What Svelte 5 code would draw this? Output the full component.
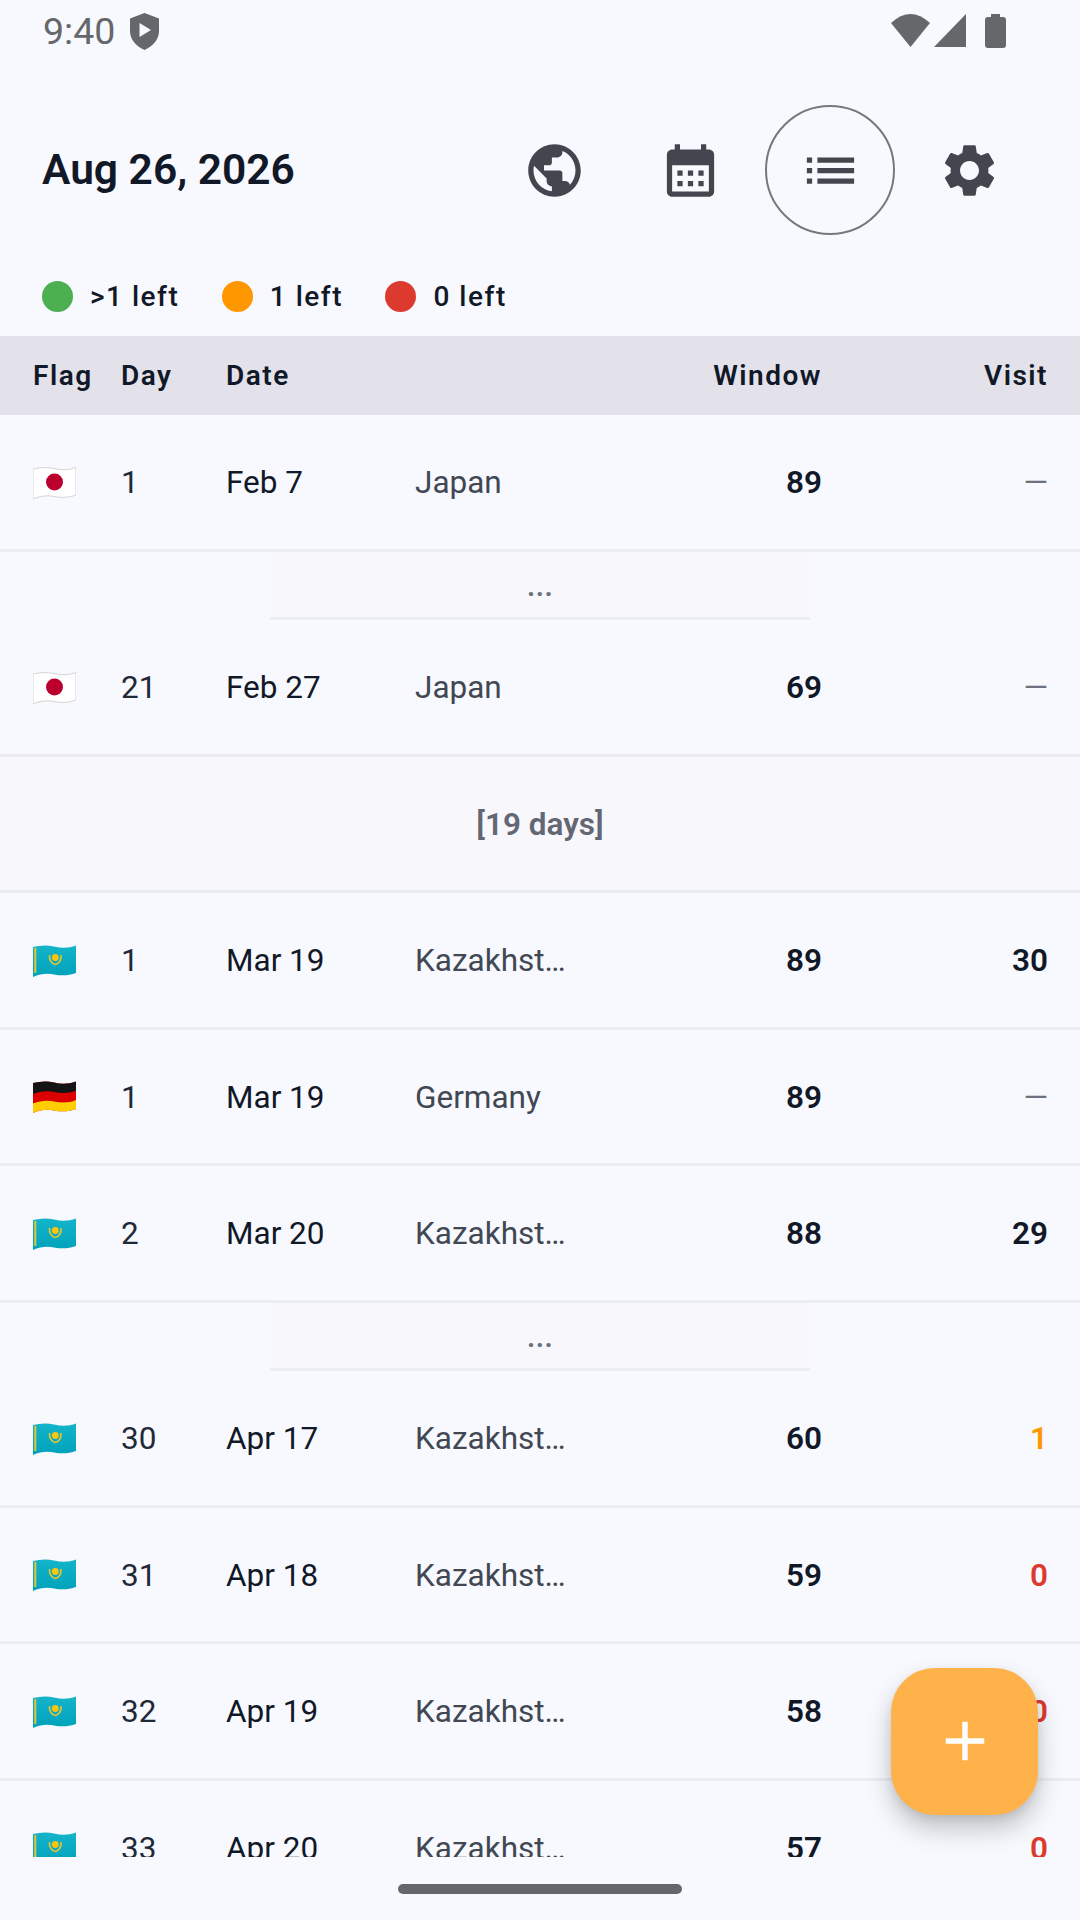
<script>
  const rows = [
    { kind: 'row', flag: 'jp', day: 1, date: 'Feb 7', country: 'Japan', win: 89, visit: '—', tone: 'dash' },
    { kind: 'gap' },
    { kind: 'row', flag: 'jp', day: 21, date: 'Feb 27', country: 'Japan', win: 69, visit: '—', tone: 'dash' },
    { kind: 'band', text: '[19 days]' },
    { kind: 'row', flag: 'kz', day: 1, date: 'Mar 19', country: 'Kazakhst…', win: 89, visit: '30', tone: '' },
    { kind: 'row', flag: 'de', day: 1, date: 'Mar 19', country: 'Germany', win: 89, visit: '—', tone: 'dash' },
    { kind: 'row', flag: 'kz', day: 2, date: 'Mar 20', country: 'Kazakhst…', win: 88, visit: '29', tone: '' },
    { kind: 'gap' },
    { kind: 'row', flag: 'kz', day: 30, date: 'Apr 17', country: 'Kazakhst…', win: 60, visit: '1', tone: 'warn' },
    { kind: 'row', flag: 'kz', day: 31, date: 'Apr 18', country: 'Kazakhst…', win: 59, visit: '0', tone: 'bad' },
    { kind: 'row', flag: 'kz', day: 32, date: 'Apr 19', country: 'Kazakhst…', win: 58, visit: '0', tone: 'bad' },
    { kind: 'row', flag: 'kz', day: 33, date: 'Apr 20', country: 'Kazakhst…', win: 57, visit: '0', tone: 'bad' }
  ];
  const legend = [
    { color: '#4caf50', label: '>1 left' },
    { color: '#ff9800', label: '1 left' },
    { color: '#dd3a2f', label: '0 left' }
  ];
  const shape = 'M0 2C7 .5 14 0 21 1.5C29 3.500 36 3 43 .5V28C36 30.500 29 31 21 29.500C14 28 7 29 0 32Z';
</script>

{#snippet flagIcon(code)}
  <svg class="flag" viewBox="0 0 43 33" width="43" height="33" aria-hidden="true">
    <defs>
      <clipPath id="wave-{code}"><path d={shape} /></clipPath>
      <linearGradient id="kzg" x1="0" y1="0" x2="0" y2="1">
        <stop offset="0" stop-color="#14b4ca" /><stop offset="1" stop-color="#00a2bb" />
      </linearGradient>
    </defs>
    {#if code === 'jp'}
      <path d={shape} fill="#fff" stroke="#d4d4d4" stroke-width="1" />
      <circle cx="21.5" cy="15" r="8.5" fill="#bc002d" />
    {:else if code === 'kz'}
      <path d={shape} fill="url(#kzg)" />
      <rect x="1.3" y="3" width="2" height="25" fill="#e2c530" />
      <circle cx="22.3" cy="12.5" r="3.4" fill="#fec50c" />
      <path d="M16.5 10c-.5 5 2 9 5.8 9.500M28 10c.5 5-2 9-5.700 9.500" fill="none" stroke="#e8c62e" stroke-width="1.600" />
    {:else}
      <g clip-path="url(#wave-de)">
        <rect width="43" height="33" fill="#dd0000" />
        <path d="M0-2H43V9.500C36 12.500 29 12.500 21 11C14 9.500 7 10.500 0 13Z" fill="#141414" />
        <path d="M0 22.500C7 20 14 19 21 20.500C29 22 36 22 43 19V33H0Z" fill="#ffce00" />
      </g>
    {/if}
  </svg>
{/snippet}

<div class="page">
  <div class="status">
    <span class="time">9:40</span>
    <svg class="shield" viewBox="0 0 29 37" width="29" height="37" aria-hidden="true">
      <path fill-rule="evenodd" d="M14.500 0L29 5.500V18C29 27 22.500 33.500 14.500 37C6.500 33.500 0 27 0 18V5.500ZM9.500 10V24L21 17Z" />
    </svg>
    <span class="status-right">
      <svg viewBox="0 0 39 33" width="39" height="33" aria-hidden="true"><path d="M0 9Q19.500-9 39 9L19.500 33Z" /></svg>
      <svg viewBox="0 0 32 33" width="32" height="33" aria-hidden="true"><path d="M32 0V33H0Z" /></svg>
      <svg class="battery" viewBox="0 0 21 34" width="21" height="34" aria-hidden="true"><path d="M6 0H15V3H18Q21 3 21 6V31Q21 34 18 34H3Q0 34 0 31V6Q0 3 3 3H6Z" /></svg>
    </span>
  </div>

  <header class="topbar">
    <h1>Aug 26, 2026</h1>
    <nav class="actions">
      <button class="globe" aria-label="Countries">
        <svg viewBox="0 0 24 24"><path d="M12 2C6.480 2 2 6.480 2 12s4.480 10 10 10 10-4.480 10-10S17.520 2 12 2zm-1 17.930c-3.950-.490-7-3.850-7-7.930 0-.620.080-1.210.210-1.790L9 15v1c0 1.100.900 2 2 2v1.930zm6.900-2.540c-.260-.810-1-1.390-1.900-1.390h-1v-3c0-.550-.450-1-1-1H8v-2h2c.550 0 1-.450 1-1V7h2c1.100 0 2-.900 2-2v-.410c2.930 1.190 5 4.060 5 7.410 0 2.080-.800 3.970-2.100 5.390z" /></svg>
      </button>
      <button aria-label="Calendar">
        <svg viewBox="0 0 24 24"><path d="M19 4h-1V2h-2v2H8V2H6v2H5c-1.110 0-1.990.900-1.990 2L3 20c0 1.100.890 2 2 2h14c1.100 0 2-.900 2-2V6c0-1.100-.900-2-2-2zm0 16H5V10h14v10zM9 14H7v-2h2v2zm4 0h-2v-2h2v2zm4 0h-2v-2h2v2zm-8 4H7v-2h2v2zm4 0h-2v-2h2v2zm4 0h-2v-2h2v2z" /></svg>
      </button>
      <button class="active" aria-label="List">
        <svg viewBox="0 0 24 24"><path d="M3 13h2v-2H3v2zm0 4h2v-2H3v2zm0-8h2V7H3v2zm4 4h14v-2H7v2zm0 4h14v-2H7v2zM7 7v2h14V7H7z" /></svg>
      </button>
      <button aria-label="Settings">
        <svg viewBox="0 0 24 24"><path d="M19.140 12.940c.040-.300.060-.610.060-.940 0-.320-.020-.640-.070-.940l2.030-1.580c.180-.140.230-.410.120-.610l-1.920-3.320c-.120-.220-.370-.290-.590-.220l-2.390.960c-.500-.380-1.030-.700-1.620-.940l-.360-2.540c-.040-.240-.240-.410-.480-.410h-3.840c-.240 0-.430.170-.470.410l-.360 2.540c-.590.240-1.130.570-1.620.940l-2.390-.960c-.220-.080-.470 0-.590.220L2.740 8.870c-.120.210-.080.470.120.610l2.030 1.580c-.050.300-.090.630-.090.940s.020.640.070.940l-2.030 1.580c-.180.140-.230.410-.12.610l1.920 3.320c.120.220.370.290.590.220l2.390-.960c.500.380 1.030.700 1.620.940l.360 2.540c.050.240.240.410.480.410h3.840c.240 0 .440-.170.470-.410l.360-2.540c.590-.240 1.130-.560 1.620-.940l2.390.960c.220.080.470 0 .590-.220l1.920-3.320c.120-.220.070-.470-.120-.610l-2.010-1.580zM12 15.600c-1.980 0-3.600-1.620-3.600-3.600s1.620-3.600 3.600-3.600 3.600 1.620 3.600 3.600-1.620 3.600-3.600 3.600z" /></svg>
      </button>
    </nav>
  </header>

  <div class="legend">
    {#each legend as item}
      <span class="legend-item"><i class="dot" style:background={item.color}></i>{item.label}</span>
    {/each}
  </div>

  <div class="grid head">
    <span>Flag</span><span>Day</span><span>Date</span><span></span>
    <span class="num">Window</span><span class="num">Visit</span>
  </div>

  <div class="list">
    {#each rows as r}
      {#if r.kind === 'row'}
        <div class="grid row">
          {@render flagIcon(r.flag)}
          <span class="day">{r.day}</span>
          <span class="date">{r.date}</span>
          <span class="country">{r.country}</span>
          <span class="num win">{r.win}</span>
          <span class="num visit {r.tone}">{r.visit}</span>
        </div>
      {:else if r.kind === 'gap'}
        <div class="gap"><span>...</span></div>
      {:else}
        <div class="band">{r.text}</div>
      {/if}
    {/each}
  </div>

  <div class="gesture"><i></i></div>

  <button class="fab" aria-label="Add">
    <svg viewBox="0 0 24 24"><path d="M19 13h-6v6h-2v-6H5v-2h6V5h2v6h6v2z" /></svg>
  </button>
</div>

<style>
  :global(body) { margin: 0; background: #f8f9fe; }
  .page {
    position: relative;
    width: 1080px;
    height: 1920px;
    display: flex;
    flex-direction: column;
    overflow: hidden;
    background: #f8f9fe;
    color: #111827;
    font-family: Roboto, "Liberation Sans", sans-serif;
  }
  .status {
    height: 70px;
    flex: none;
    display: flex;
    align-items: flex-start;
    padding: 0 74px 0 43px;
    box-sizing: border-box;
    color: #66676a;
  }
  .status svg { fill: currentColor; display: block; }
  .time { font-size: 37.5px; line-height: 36px; margin-top: 13px; }
  .shield { margin: 13px 0 0 15px; }
  .status-right { margin: 14px 0 0 auto; display: flex; gap: 4px; }
  .battery { margin-left: 15px; }
  .topbar {
    height: 200px;
    flex: none;
    display: flex;
    align-items: center;
    justify-content: space-between;
    padding: 0 45.500px 0 42px;
    box-sizing: border-box;
  }
  h1 { margin: -2px 0 0; font-size: 42.5px; font-weight: 600; color: #111827; }
  .actions { display: flex; gap: 9.500px; }
  .actions button {
    width: 130px;
    height: 130px;
    padding: 0;
    border: 0;
    border-radius: 50%;
    background: none;
    display: flex;
    align-items: center;
    justify-content: center;
    box-sizing: border-box;
  }
  .actions button.globe { margin-right: -3.500px; }
  .actions button.active { border: 2px solid #77787f; }
  .actions svg { width: 63px; height: 63px; fill: #45454f; display: block; }
  .legend {
    height: 66px;
    flex: none;
    display: flex;
    gap: 42.500px;
    padding: 0 0 14px 42px;
    box-sizing: border-box;
    align-items: center;
  }
  .legend-item {
    display: flex;
    align-items: center;
    gap: 17px;
    font-size: 28px;
    font-weight: 500;
    letter-spacing: 1.500px;
    color: #111827;
  }
  .dot { width: 31px; height: 31px; border-radius: 50%; display: block; }
  .grid {
    display: grid;
    grid-template-columns: 88px 105px 189px 1fr 120px 226px;
    align-items: center;
    padding: 0 32px 0 33px;
    box-sizing: border-box;
  }
  .head {
    height: 79px;
    flex: none;
    background: #e3e2eb;
    font-size: 28px;
    font-weight: 600;
    letter-spacing: 1.500px;
    color: #111827;
  }
  .num { text-align: right; }
  .list { flex: 1; min-height: 0; overflow: hidden; }
  .row {
    height: 136.500px;
    padding-top: 2px;
    border-bottom: 3px solid #ecedf3;
    font-size: 31.500px;
  }
  .flag { display: block; margin-top: 1px; }
  .day { color: #1f2937; }
  .date { color: #111827; }
  .country { color: #414753; }
  .win { font-weight: 600; color: #111827; }
  .visit { font-weight: 600; color: #111827; }
  .visit.dash { font-weight: 400; color: #6b7280; }
  .visit.warn { color: #ff9800; }
  .visit.bad { color: #dd3a2f; }
  .gap {
    height: 68.500px;
    width: 540px;
    margin: 0 auto;
    padding-top: 3px;
    box-sizing: border-box;
    background: #f8f7fc;
    border-bottom: 3px solid #ecedf3;
    display: flex;
    align-items: center;
    justify-content: center;
    font-size: 31.500px;
    font-weight: 500;
    color: #6b7280;
  }
  .band {
    height: 136.500px;
    padding-top: 2px;
    box-sizing: border-box;
    background: #f8f7fc;
    border-bottom: 3px solid #ecedf3;
    display: flex;
    align-items: center;
    justify-content: center;
    font-size: 31.500px;
    font-weight: 600;
    color: #636773;
  }
  .gesture {
    height: 63px;
    flex: none;
    position: relative;
    display: flex;
    justify-content: center;
    padding-top: 27px;
    box-sizing: border-box;
  }
  .gesture i { width: 284px; height: 10px; border-radius: 5px; background: #66676a; display: block; }
  .fab {
    position: absolute;
    left: 891px;
    top: 1667.500px;
    width: 147px;
    height: 147px;
    padding: 0;
    border: 0;
    border-radius: 44px;
    background: #ffb14a;
    box-shadow: 0 14px 26px rgba(0, 0, 0, 0.22), 0 4px 10px rgba(0, 0, 0, 0.08);
    display: flex;
    align-items: center;
    justify-content: center;
  }
  .fab svg { width: 66px; height: 66px; fill: #fff; display: block; }
</style>
